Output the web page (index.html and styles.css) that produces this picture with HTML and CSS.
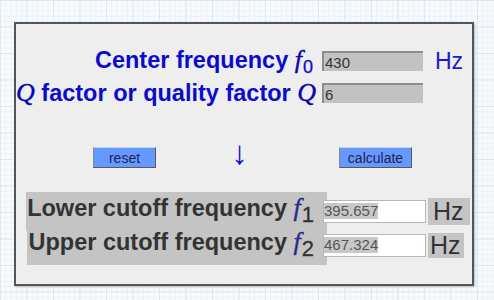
FILE: index.html
```html
<!DOCTYPE html>
<html lang="en">
<head>
    <meta charset="UTF-8">
    <title>Bandwidth calculator</title>
    <link rel="stylesheet" href="styles.css">
</head>
<body>
    <div class="panel">
        <div class="inputs">
            <div class="row">
                <label class="lbl" for="fc">Center frequency <span class="var">f</span><sub class="sub">0</sub></label>
                <input class="field" id="fc" type="text" value="430">
                <span class="unit">Hz</span>
            </div>
            <div class="row">
                <label class="lbl" for="q"><span class="var">Q</span> factor or quality factor <span class="var">Q</span></label>
                <input class="field" id="q" type="text" value="6">
            </div>
        </div>

        <div class="actions">
            <button class="btn">reset</button>
            <span class="arrow">&#8595;</span>
            <button class="btn btn-calc">calculate</button>
        </div>

        <div class="results">
            <div class="res-row">
                <div class="res-cell">
                    <span class="res-lbl">Lower cutoff frequency <span class="var var-res">f</span><sub class="sub sub-res">1</sub></span>
                </div>
                <div class="out"><span class="val">395.657</span></div>
                <span class="res-unit">Hz</span>
            </div>
            <div class="res-row">
                <div class="res-cell">
                    <span class="res-lbl">Upper cutoff frequency <span class="var var-res">f</span><sub class="sub sub-res">2</sub></span>
                </div>
                <div class="out"><span class="val">467.324</span></div>
                <span class="res-unit res-unit-sm">Hz</span>
            </div>
        </div>
    </div>
</body>
</html>
```

FILE: styles.css
```css
/* fundo quadriculado */
body {
    margin: 0;
    padding: 22px 0 0 14px;
    height: 300px;
    box-sizing: border-box;
    font-family: "Liberation Sans", Arial, sans-serif;
    background-color: #f8fbfd;
    background-image:
        linear-gradient(to right, #dde9f2 1px, transparent 1px),
        linear-gradient(to bottom, #dde9f2 1px, transparent 1px),
        linear-gradient(to right, #eaf1f7 1px, transparent 1px),
        linear-gradient(to bottom, #eaf1f7 1px, transparent 1px);
    background-size: 26.5px 26.5px, 26.5px 26.5px, 5.3px 5.3px, 5.3px 5.3px;
}

.panel {
    width: 456px;
    height: 260px;
    border: 2px solid #555;
    background-color: #eeeeee;
    box-shadow: 1px 1px 2px rgba(0, 0, 0, 0.25);
}

.inputs {
    padding-top: 21px;
}

.row {
    display: flex;
    align-items: center;
    height: 32px;
}

.lbl {
    width: 297px;
    text-align: right;
    white-space: nowrap;
    font-size: 23.5px;
    font-weight: bold;
    color: #0b0bcc;
}

.var {
    font-family: "Liberation Serif", "Times New Roman", serif;
    font-style: italic;
    font-weight: normal;
    font-size: 26px;
    color: #0505b0;
    -webkit-text-stroke: 0.4px currentColor;
}

.sub {
    font-size: 18px;
    font-weight: normal;
    vertical-align: -5px;
    margin-left: 1px;
    -webkit-text-stroke: 0.3px currentColor;
}

.field {
    margin-left: 9px;
    width: 101px;
    height: 20px;
    box-sizing: border-box;
    padding: 0 0 0 1px;
    border: none;
    border-top: 2px solid #8c8c8c;
    border-left: 2px solid #8c8c8c;
    background-color: #c2c2c2;
    font-family: "Liberation Sans", Arial, sans-serif;
    font-size: 15px;
    color: #333;
}

.unit {
    margin-left: 12px;
    font-size: 23px;
    color: #1a1acc;
}

.actions {
    display: flex;
    align-items: center;
    margin-top: 38px;
    padding-left: 77px;
    height: 21px;
}

.btn {
    width: 63px;
    height: 21px;
    padding: 0;
    border: 1px solid;
    border-color: #c9d4e6 #5a5a5a #5a5a5a #8a8a8a;
    background-color: #6699ff;
    font-family: "Liberation Sans", Arial, sans-serif;
    font-size: 14px;
    color: #1c2450;
}

.btn-calc {
    width: 73px;
}

.arrow {
    display: flex;
    justify-content: center;
    width: 13px;
    margin: -10px 93px 0 77px;
    font-family: "Liberation Sans", sans-serif;
    font-size: 33px;
    line-height: 33px;
    color: #1010cc;
}

.results {
    margin-top: 26px;
}

.res-row {
    display: flex;
    align-items: center;
    height: 34px;
}

.res-cell {
    width: 311px;
    text-align: right;
}

.res-lbl {
    display: inline-block;
    padding: 0 13px 0 1px;
    background-color: #c4c4c4;
    white-space: nowrap;
    font-size: 23.5px;
    font-weight: bold;
    line-height: 32px;
    color: #333;
}

.var-res {
    color: #2a2a8c;
}

.sub-res {
    font-size: 22px;
    vertical-align: -6px;
    color: #333;
}

.out {
    display: flex;
    align-items: center;
    width: 103px;
    height: 23px;
    box-sizing: border-box;
    margin-left: -4px;
    border: 1px solid #b8b8b8;
    background-color: #fff;
}

.val {
    background-color: #c8c8c8;
    font-size: 15px;
    line-height: 16px;
    color: #555;
}

.res-unit {
    margin-left: 2px;
    padding: 0 6px 0 5px;
    background-color: #c4c4c4;
    font-size: 25px;
    line-height: 27px;
    color: #333;
}

.res-unit-sm {
    padding: 0 3px 0 2px;
    line-height: 25px;
}
```
